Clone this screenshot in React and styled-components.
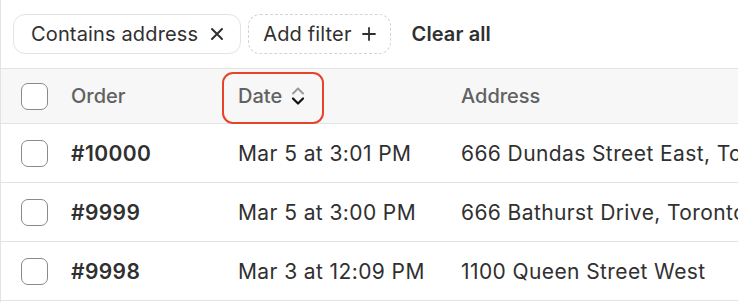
import React from 'react';
import styled, { createGlobalStyle } from 'styled-components';

const Global = createGlobalStyle`
  body {
    margin: 0;
    background: #fff;
    font-family: Inter, "Noto Sans", sans-serif;
    color: #303030;
  }
`

const Page = styled.div`
  border-left: 1px solid #e3e3e3;
  height: 302px;
  overflow: hidden;
`

const FilterBar = styled.div`
  display: flex;
  align-items: center;
  gap: 7px;
  height: 68px;
  padding-left: 12px;
  box-sizing: border-box;
`

const Chip = styled.button`
  display: flex;
  align-items: center;
  gap: ${p => (p.$dashed ? '9px' : '12px')};
  height: 40px;
  padding: ${p => (p.$dashed ? '0 13px 0 14px' : '0 16px 0 17px')};
  border: 1px ${p => (p.$dashed ? 'dashed #d4d4d4' : 'solid #e3e3e3')};
  border-radius: 12px;
  background: #fff;
  font: 400 20px Inter, sans-serif;
  letter-spacing: 0.15px;
  color: #303030;
  cursor: pointer;
`

const ClearAll = styled.button`
  border: none;
  background: none;
  margin-left: 14px;
  font: 600 20px Inter, sans-serif;
  letter-spacing: 0.1px;
  color: #303030;
  padding: 0;
`

const Row = styled.div`
  display: grid;
  grid-template-columns: 70px 167px 223px 1fr;
  align-items: center;
  height: ${p => (p.$head ? '54px' : '58px')};
  border-bottom: 1px solid #e3e3e3;
  background: ${p => (p.$head ? '#f7f7f7' : '#fff')};
  border-top: ${p => (p.$head ? '1px solid #e3e3e3' : 'none')};
  white-space: nowrap;
`

const CheckCell = styled.div`
  padding-left: 20px;
  display: flex;
  align-items: center;
`

const Checkbox = styled.span`
  width: 25px;
  height: 25px;
  border: 1.3px solid #8a8a8a;
  border-radius: 7px;
  background: #fff;
`

const HeadCell = styled.div`
  color: #616161;
  font-size: 20px;
  font-weight: 500;
  position: relative;
  display: flex;
  align-items: center;
  gap: 8px;
`

const Highlight = styled.span`
  position: absolute;
  left: -16px;
  top: -12px;
  width: 98px;
  height: 48px;
  border: 2.5px solid #e5432c;
  border-radius: 11px;
  pointer-events: none;
`

const Cell = styled.div`
  font-size: 21px;
  letter-spacing: 0.4px;
  font-weight: ${p => (p.$bold ? 600 : 400)};
  color: #303030;
  overflow: hidden;
`

const SortIcon = () => (
  <svg width="16" height="24" viewBox="0 0 16 24" fill="none" strokeLinecap="round" strokeLinejoin="round">
    <path d="M3 9.5 L8 4.5 L13 9.5" stroke="#9a9a9a" strokeWidth="2" />
    <path d="M3 14.5 L8 19.5 L13 14.5" stroke="#111" strokeWidth="2.2" />
  </svg>
)

const XIcon = () => (
  <svg width="14" height="14" viewBox="0 0 14 14" stroke="#303030" strokeWidth="2" strokeLinecap="round">
    <path d="M2 2 L12 12 M12 2 L2 12" />
  </svg>
)

const PlusIcon = () => (
  <svg width="16" height="16" viewBox="0 0 16 16" stroke="#303030" strokeWidth="1.8" strokeLinecap="round">
    <path d="M8 2 V14 M2 8 H14" />
  </svg>
)

const orders = [
  { id: '#10000', date: 'Mar 5 at 3:01 PM', address: '666 Dundas Street East, Toronto' },
  { id: '#9999', date: 'Mar 5 at 3:00 PM', address: '666 Bathurst Drive, Toronto' },
  { id: '#9998', date: 'Mar 3 at 12:09 PM', address: '1100 Queen Street West' },
]

const App = () => (
  <Page>
    <Global />
    <FilterBar>
      <Chip>Contains address <XIcon /></Chip>
      <Chip $dashed>Add filter <PlusIcon /></Chip>
      <ClearAll>Clear all</ClearAll>
    </FilterBar>
    <Row $head>
      <CheckCell><Checkbox /></CheckCell>
      <HeadCell>Order</HeadCell>
      <HeadCell>
        <Highlight />
        Date <SortIcon />
      </HeadCell>
      <HeadCell>Address</HeadCell>
    </Row>
    {orders.map(o => (
      <Row key={o.id}>
        <CheckCell><Checkbox /></CheckCell>
        <Cell $bold>{o.id}</Cell>
        <Cell>{o.date}</Cell>
        <Cell>{o.address}</Cell>
      </Row>
    ))}
  </Page>
);

export default App;
